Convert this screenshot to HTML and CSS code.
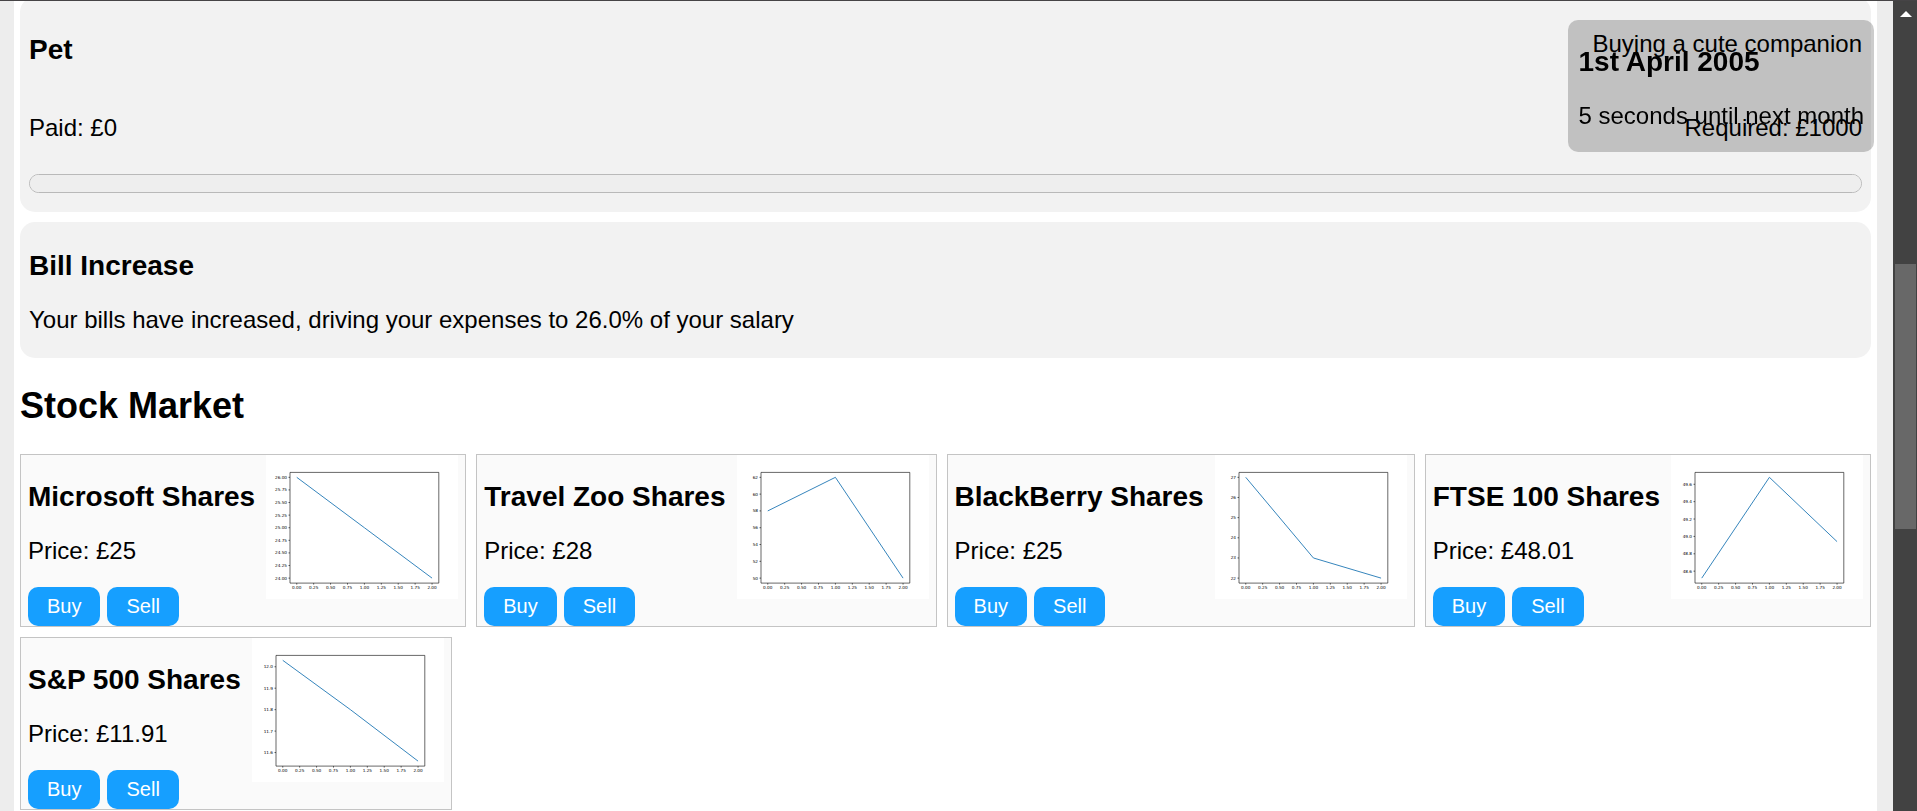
FILE: index.html
```
<!DOCTYPE html>
<html lang="en">
<head>
    <meta charset="UTF-8">
    <meta name="viewport" content="width=device-width, initial-scale=1.0">
    <title>Stock Market</title>
    <link rel="stylesheet" href="styles.css">
</head>
<body>
<main class="page">
    <section class="card goal">
        <div class="goal-row">
            <h3>Pet</h3>
            <p>Buying a cute companion</p>
        </div>
        <div class="goal-row">
            <p>Paid: £0</p>
            <p>Required: £1000</p>
        </div>
        <progress class="goal-progress" value="0" max="1000" aria-label="Pet savings"></progress>
    </section>

    <section class="card event">
        <h3>Bill Increase</h3>
        <p>Your bills have increased, driving your expenses to 26.0% of your salary</p>
    </section>

    <h2>Stock Market</h2>
    <div class="stocks">
        <article class="stock">
            <div class="stock-info">
                <h3>Microsoft Shares</h3>
                <p>Price: £25</p>
                <div class="stock-buttons">
                    <button type="button">Buy</button>
                    <button type="button">Sell</button>
                </div>
            </div>
            <svg class="chart" id="chart-microsoft" viewBox="0 0 640 480"></svg>
        </article>
        <article class="stock">
            <div class="stock-info">
                <h3>Travel Zoo Shares</h3>
                <p>Price: £28</p>
                <div class="stock-buttons">
                    <button type="button">Buy</button>
                    <button type="button">Sell</button>
                </div>
            </div>
            <svg class="chart" id="chart-travelzoo" viewBox="0 0 640 480"></svg>
        </article>
        <article class="stock">
            <div class="stock-info">
                <h3>BlackBerry Shares</h3>
                <p>Price: £25</p>
                <div class="stock-buttons">
                    <button type="button">Buy</button>
                    <button type="button">Sell</button>
                </div>
            </div>
            <svg class="chart" id="chart-blackberry" viewBox="0 0 640 480"></svg>
        </article>
        <article class="stock">
            <div class="stock-info">
                <h3>FTSE 100 Shares</h3>
                <p>Price: £48.01</p>
                <div class="stock-buttons">
                    <button type="button">Buy</button>
                    <button type="button">Sell</button>
                </div>
            </div>
            <svg class="chart" id="chart-ftse" viewBox="0 0 640 480"></svg>
        </article>
        <article class="stock">
            <div class="stock-info">
                <h3>S&amp;P 500 Shares</h3>
                <p>Price: £11.91</p>
                <div class="stock-buttons">
                    <button type="button">Buy</button>
                    <button type="button">Sell</button>
                </div>
            </div>
            <svg class="chart" id="chart-sp" viewBox="0 0 640 480"></svg>
        </article>
    </div>
</main>

<div class="scrollbar">
    <svg class="scroll-arrow" viewBox="0 0 12 6"><path d="M6 0 L12 6 H0 Z"/></svg>
    <div class="scroll-track">
        <div class="scroll-thumb"></div>
    </div>
</div>

<aside class="date-box">
    <h3>1st April 2005</h3>
    <p>5 seconds until next month</p>
</aside>

<script src="charts.js"></script>
</body>
</html>
```
FILE: styles.css
```
* {
    box-sizing: border-box;
}

body {
    font-family: "Liberation Sans", Arial, sans-serif;
    font-size: 24px;
    line-height: 28px;
    color: #000000;
    background-color: #ededed;
    margin: 0;
    border-top: 1px solid #464446;
    display: flex;
    height: 100vh;
    overflow: hidden;
}

h2 {
    font-size: 36px;
    line-height: 41px;
    margin: 27px 0 28px;
}

h3 {
    font-size: 28px;
    line-height: 32px;
    margin: 26px 0 24px;
}

p {
    margin: 24px 0;
}

.page {
    flex: 1;
    margin: 0 16px 0 14px;
    padding: 0 6px;
    background-color: #ffffff;
    overflow: hidden;
}

/* Goals and events */
.card {
    background-color: #f2f2f2;
    border-radius: 15px;
    margin-bottom: 10px;
}

.goal {
    margin-top: -4px;
    padding: 9px 9px 19px;
}

.goal-row {
    display: flex;
    justify-content: space-between;
}

.goal-row h3 {
    margin-top: 28px;
}

.goal-progress {
    display: block;
    appearance: none;
    width: 100%;
    height: 19px;
    margin-top: 8px;
    background-color: #eeeeee;
    border: 1px solid #b9b9b9;
    border-radius: 10px;
    overflow: hidden;
}

.goal-progress::-webkit-progress-bar {
    background-color: #eeeeee;
}

.goal-progress::-webkit-progress-value {
    background-color: #169fff;
}

.event {
    display: flow-root;
    padding: 2px 9px 0;
}

/* Stocks */
.stocks {
    display: flex;
    flex-wrap: wrap;
    justify-content: space-between;
    gap: 10px 9px;
}

.stock {
    display: flex;
    align-items: flex-start;
    gap: 11px;
    padding: 0 7px;
    background-color: #fafafa;
    border: 1px solid #c4c4c4;
}

.stock-info p {
    margin-bottom: 22px;
}

.stock-buttons {
    display: flex;
    gap: 7px;
}

.stock-buttons button {
    font-family: inherit;
    font-size: 20px;
    line-height: 23px;
    padding: 8px 19px;
    color: #ffffff;
    background-color: #169fff;
    border: none;
    border-radius: 10px;
    cursor: pointer;
}

.chart {
    width: 192px;
    height: 144px;
    background-color: #ffffff;
}

.chart .axes {
    fill: none;
    stroke: #000000;
    stroke-width: 2;
}

.chart .line {
    fill: none;
    stroke: #1f77b4;
    stroke-width: 3;
}

.chart text {
    font-family: "DejaVu Sans", sans-serif;
    font-size: 14px;
}

/* Date box */
.date-box {
    position: fixed;
    top: 20px;
    right: 43px;
    padding: 0 10px;
    background-color: rgba(0, 0, 0, 0.2);
    border-radius: 10px;
}

.date-box p {
    margin-bottom: 22px;
}

/* Scrollbar */
.scrollbar {
    width: 24px;
    background-color: #424242;
    display: flex;
    flex-direction: column;
    padding: 10px 1px 24px 2px;
}

.scroll-arrow {
    width: 12px;
    height: 6px;
    align-self: center;
    fill: #ffffff;
}

.scroll-track {
    flex: 1;
    display: grid;
    grid-template-rows: 247fr 265fr 258fr;
}

.scroll-thumb {
    grid-row: 2;
    background-color: #686868;
}
```
FILE: charts.js
```
const charts = {
    'chart-microsoft': { prices: [26, 25, 24], first: 24, step: 0.25, ticks: 9, digits: 2 },
    'chart-travelzoo': { prices: [58, 62, 50], first: 50, step: 2, ticks: 7, digits: 0 },
    'chart-blackberry': { prices: [27, 23, 22], first: 22, step: 1, ticks: 6, digits: 0 },
    'chart-ftse': { prices: [48.52, 49.68, 48.94], first: 48.6, step: 0.2, ticks: 6, digits: 1 },
    'chart-sp': { prices: [12.03, 11.8, 11.56], first: 11.6, step: 0.1, ticks: 5, digits: 1 }
};

// plot area
const left = 80, right = 576, top_ = 58, bottom = 427;

for (const id in charts) {
    const { prices, first, step, ticks, digits } = charts[id];
    const min = Math.min(...prices);
    const max = Math.max(...prices);
    const x = month => 102.5 + month * 225.5;
    const y = price => 410.4 - (price - min) / (max - min) * 336;

    let axes = `M${left} ${top_}H${right}V${bottom}H${left}Z`;
    let labels = '';

    for (let i = 0; i <= 8; i++) {
        axes += `M${x(i / 4)} ${bottom}v5`;
        labels += `<text x="${x(i / 4)}" y="447" text-anchor="middle">${(i / 4).toFixed(2)}</text>`;
    }
    for (let i = 0; i < ticks; i++) {
        const value = first + i * step;
        axes += `M${left} ${y(value)}h-5`;
        labels += `<text x="70" y="${y(value) + 5}" text-anchor="end">${value.toFixed(digits)}</text>`;
    }

    const points = prices.map((price, i) => `${x(i)},${y(price)}`).join(' ');
    document.getElementById(id).innerHTML =
        `<path class="axes" d="${axes}"/>${labels}<polyline class="line" points="${points}"/>`;
}
```
